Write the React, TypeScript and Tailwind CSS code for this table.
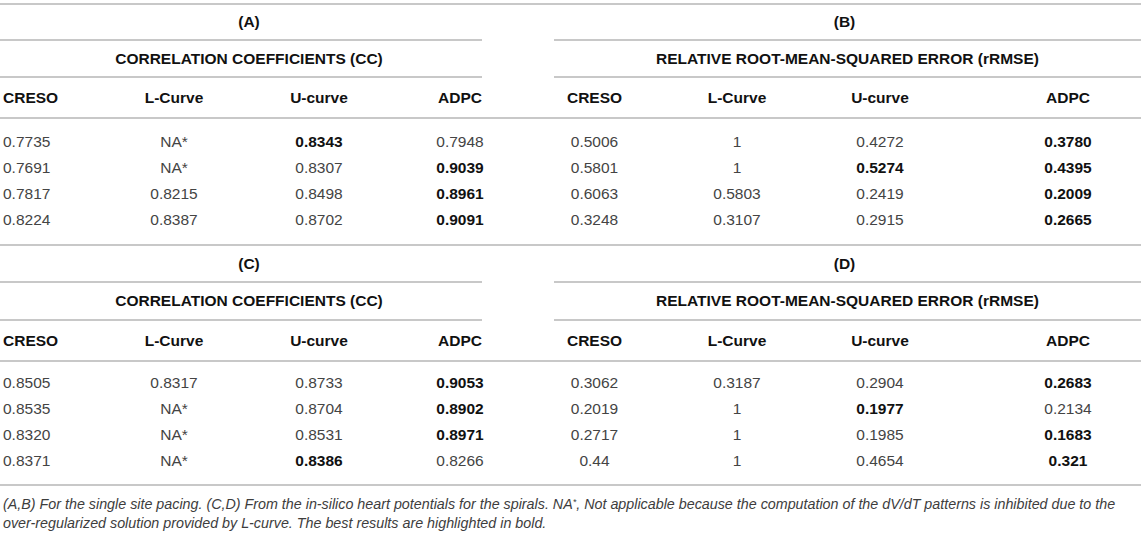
type Cell = { v: string; b?: boolean };

const n = (v: string): Cell => ({ v });
const b = (v: string): Cell => ({ v, b: true });

const headers: Cell[] = [b("CRESO"), b("L-Curve"), b("U-curve"), b("ADPC")];

const tableA: Cell[][] = [
  [n("0.7735"), n("NA*"), b("0.8343"), n("0.7948")],
  [n("0.7691"), n("NA*"), n("0.8307"), b("0.9039")],
  [n("0.7817"), n("0.8215"), n("0.8498"), b("0.8961")],
  [n("0.8224"), n("0.8387"), n("0.8702"), b("0.9091")],
];

const tableB: Cell[][] = [
  [n("0.5006"), n("1"), n("0.4272"), b("0.3780")],
  [n("0.5801"), n("1"), b("0.5274"), b("0.4395")],
  [n("0.6063"), n("0.5803"), n("0.2419"), b("0.2009")],
  [n("0.3248"), n("0.3107"), n("0.2915"), b("0.2665")],
];

const tableC: Cell[][] = [
  [n("0.8505"), n("0.8317"), n("0.8733"), b("0.9053")],
  [n("0.8535"), n("NA*"), n("0.8704"), b("0.8902")],
  [n("0.8320"), n("NA*"), n("0.8531"), b("0.8971")],
  [n("0.8371"), n("NA*"), b("0.8386"), n("0.8266")],
];

const tableD: Cell[][] = [
  [n("0.3062"), n("0.3187"), n("0.2904"), b("0.2683")],
  [n("0.2019"), n("1"), b("0.1977"), n("0.2134")],
  [n("0.2717"), n("1"), n("0.1985"), b("0.1683")],
  [n("0.44"), n("1"), n("0.4654"), b("0.321")],
];

const Val = ({ c }: { c: Cell }) => (
  <span
    className={`whitespace-nowrap ${
      c.b ? "font-bold text-[#111]" : "text-[#444]"
    }`}
  >
    {c.v}
  </span>
);

const LeftCells = ({ cells }: { cells: Cell[] }) => (
  <div className="grid w-[482px] shrink-0 grid-cols-[148px_52px_238px_44px] items-center">
    <div className="flex justify-start pl-[3px]">
      <Val c={cells[0]} />
    </div>
    <div className="flex justify-center">
      <Val c={cells[1]} />
    </div>
    <div className="flex justify-center">
      <Val c={cells[2]} />
    </div>
    <div className="flex justify-center">
      <Val c={cells[3]} />
    </div>
  </div>
);

const RightCells = ({ cells }: { cells: Cell[] }) => (
  <div className="grid flex-1 grid-cols-[81px_204px_82px_74px_146px] items-center">
    <div className="flex justify-center">
      <Val c={cells[0]} />
    </div>
    <div className="flex justify-center">
      <Val c={cells[1]} />
    </div>
    <div className="flex justify-center">
      <Val c={cells[2]} />
    </div>
    <div className="col-start-5 flex justify-center">
      <Val c={cells[3]} />
    </div>
  </div>
);

type BlockProps = {
  left: string;
  right: string;
  leftTitle: string;
  rightTitle: string;
  leftRows: Cell[][];
  rightRows: Cell[][];
  first?: boolean;
};

function Block({ left, right, leftTitle, rightTitle, leftRows, rightRows, first }: BlockProps) {
  return (
    <div className={first ? "border-t-2 border-[#c8c8c8]" : ""}>
      <div className={`flex font-bold text-[#111] ${first ? "h-[36px]" : "h-[37px]"}`}>
        <div className="flex w-[482px] shrink-0 items-center justify-center border-b-2 border-[#c8c8c8] pl-[16px]">
          {left}
        </div>
        <div className="w-[72px] shrink-0" />
        <div className="flex flex-1 items-center justify-center border-b-2 border-[#c8c8c8] pr-[6px]">
          {right}
        </div>
      </div>
      <div className={`flex font-bold text-[#111] ${first ? "h-[37px]" : "h-[38px]"}`}>
        <div className="flex w-[482px] shrink-0 items-center justify-center border-b-2 border-[#c8c8c8] pl-[16px]">
          {leftTitle}
        </div>
        <div className="w-[72px] shrink-0" />
        <div className="flex flex-1 items-center justify-center border-b-2 border-[#c8c8c8]">
          {rightTitle}
        </div>
      </div>
      <div className="flex h-[41px] items-center border-b-2 border-[#c8c8c8]">
        <LeftCells cells={headers} />
        <div className="w-[72px] shrink-0" />
        <RightCells cells={headers} />
      </div>
      <div
        className={`flex flex-col border-b-2 border-[#c8c8c8] ${
          first ? "pt-[10px] pb-[11px]" : "pt-[8px] pb-[10px]"
        }`}
      >
        {leftRows.map((row, i) => (
          <div key={i} className="flex h-[26px] items-center">
            <LeftCells cells={row} />
            <div className="w-[72px] shrink-0" />
            <RightCells cells={rightRows[i]} />
          </div>
        ))}
      </div>
    </div>
  );
}

export default function App() {
  return (
    <div className="min-h-screen bg-white">
      <div className="w-[1141px] pt-[3px] font-['Liberation_Sans',Arial,sans-serif] text-[15.5px]">
        <Block
          first
          left="(A)"
          right="(B)"
          leftTitle="CORRELATION COEFFICIENTS (CC)"
          rightTitle="RELATIVE ROOT-MEAN-SQUARED ERROR (rRMSE)"
          leftRows={tableA}
          rightRows={tableB}
        />
        <Block
          left="(C)"
          right="(D)"
          leftTitle="CORRELATION COEFFICIENTS (CC)"
          rightTitle="RELATIVE ROOT-MEAN-SQUARED ERROR (rRMSE)"
          leftRows={tableC}
          rightRows={tableD}
        />
        <p className="mt-[9px] pl-[3px] text-[14.3px] italic leading-[19px] text-[#3d3d3d]">
          (A,B) For the single site pacing. (C,D) From the in-silico heart potentials for the
          spirals. NA<sup className="text-[9px]">*</sup>, Not applicable because the computation of
          the dV/dT patterns is inhibited due to the{" "}
          <span className="whitespace-nowrap">over-regularized</span> solution provided by L-curve.
          The best results are highlighted in bold.
        </p>
      </div>
    </div>
  );
}
